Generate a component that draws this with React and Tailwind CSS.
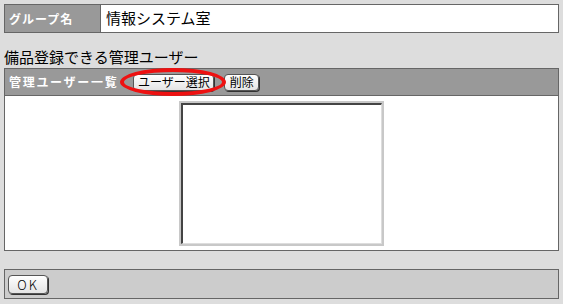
import React from 'react';

const jp = { fontFamily: '"Noto Sans CJK JP", "Noto Sans", sans-serif' };

const Btn = ({ children, className = '' }) => (
  <button
    className={`h-[17px] flex items-center justify-center rounded-[4px] border border-[#555] bg-gradient-to-b from-white to-[#e4e4e4] text-[12px] leading-none text-black shadow-[1px_1px_0_#333] ${className}`}
  >
    {children}
  </button>
);

const App = () => {
  return (
    <div className="w-[563px] h-[304px] bg-[#dddddd] p-1 flex flex-col" style={jp}>
      {/* Group name row */}
      <div className="flex h-[29px] border border-[#666] w-[555px]">
        <div className="w-[96px] bg-[#999999] text-white font-bold text-[12px] tracking-[1px] flex items-center pl-[4px] border-r border-[#666]">
          グループ名
        </div>
        <div className="flex-1 bg-white flex items-center pl-[5px] text-[15px] text-black">
          情報システム室
        </div>
      </div>

      <div className="mt-[14px] text-[15px] leading-[20px] text-black">備品登録できる管理ユーザー</div>

      {/* Manager list panel */}
      <div className="mt-[1px] border border-[#666] w-[555px]">
        <div className="h-[26px] bg-[#999999] flex items-center pl-[4px] gap-[3px]">
          <span className="text-white font-bold text-[12px] tracking-[1.7px] mr-[12px]">管理ユーザー一覧</span>
          <div className="relative">
            <Btn className="w-[81px]">ユーザー選択</Btn>
            <div className="absolute left-[-13px] top-[-6px] w-[106px] h-[28px] rounded-[50%] border-4 border-[#ee1111] pointer-events-none" />
          </div>
          <Btn className="w-[35px] ml-[7px]">削除</Btn>
        </div>
        <div className="h-[155px] bg-white border-t border-[#666] flex justify-center pt-[5px]">
          <div className="w-[205px] h-[145px] border-2 border-[#c8c8c8]">
            <div className="w-full h-full bg-white border-t-2 border-l-2 border-[#444] border-r border-b border-r-[#ddd] border-b-[#ddd]" />
          </div>
        </div>
      </div>

      {/* Footer */}
      <div className="mt-[18px] h-[30px] bg-[#cccccc] border border-[#666] w-[555px] flex items-center pl-[3px]">
        <Btn className="w-[40px] h-[19px] text-[13px] tracking-[2px] font-light">OK</Btn>
      </div>
    </div>
  );
};

export default App;
